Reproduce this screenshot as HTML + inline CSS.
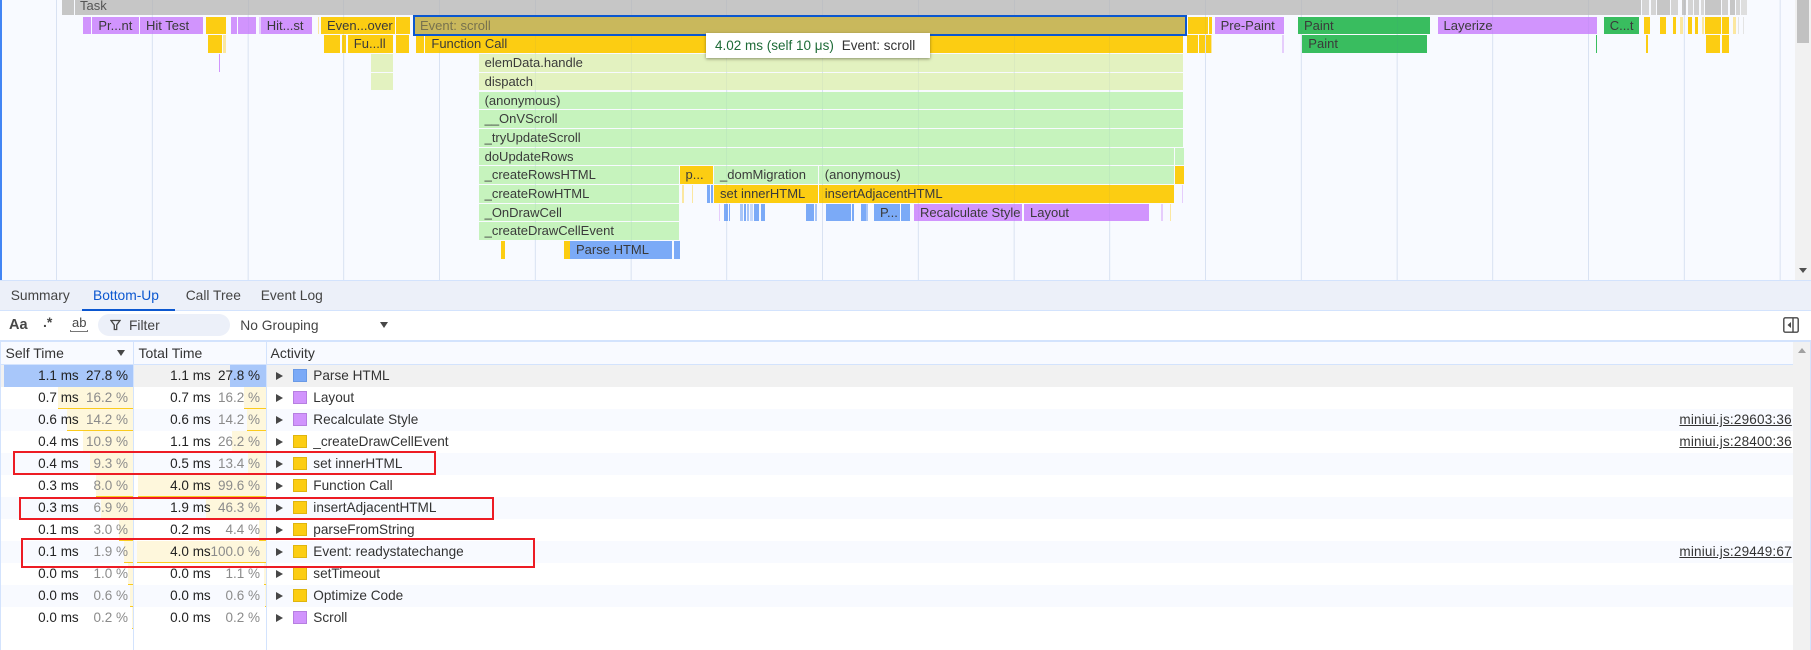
<!DOCTYPE html>
<html><head><meta charset="utf-8"><title>Bottom-Up</title>
<style>
html,body{margin:0;padding:0;width:1811px;height:650px;overflow:hidden;background:#fff;font-family:"Liberation Sans",sans-serif;font-size:13.6px;color:#333}
div,span,a{position:absolute;white-space:nowrap;box-sizing:border-box}
#fl{left:0;top:0;width:1811px;height:280px;background:linear-gradient(90deg,#e2e9f6 1.2px,transparent 1.2px) 56px 0/95.75px 100% repeat-x,#f8faff;overflow:hidden}
.g{top:0;width:1.2px;height:280px;background:rgba(60,90,170,.05);z-index:5}
.f{height:17.7px;line-height:17.7px;font-size:13px;color:#3a3a3a;padding-left:6px;overflow:hidden}
.f:empty{padding:0}
.r0{top:16.7px}.r1{top:35.3px}.r2{top:54px}.r3{top:72.7px}.r4{top:91.7px}.r5{top:110px}.r6{top:129px}.r7{top:147.7px}.r8{top:166.3px}.r9{top:185px}.r10{top:203.7px}.r11{top:222.3px}.r12{top:241px}
.p{background:#d194fd}.y{background:#fccd12}.gn{background:#39bd5f}.l{background:#e3f2c0}.m{background:#c6f3bd}.bl{background:#7baaf7}
.lp{background:#e6cdfc}.ly{background:#fbe7a0}.t{top:0;height:15.4px;background:#c6c6c6}
.tab{top:286px;line-height:20px;font-size:13.8px;color:#444}
.row{left:1px;width:1792px;height:22px}
.bar{height:22px;background:#fef7dc;border-bottom:1.3px solid #fbcb1e}
.n{height:22px;line-height:21px;text-align:right;color:#222;font-size:13.5px}
.pc{color:#8b8b8b}
.tri{left:275.5px;width:0;height:0;border-left:7px solid #474747;border-top:4px solid transparent;border-bottom:4px solid transparent}
.ic{left:293.3px;width:13.4px;height:13.4px;border:1px solid #dfb50f;background:#fccd12}
.ic.pu{background:#d194fd;border-color:#b67fe0}.ic.bu{background:#7baaf7;border-color:#6a9ae6}
.nm{left:313.3px;height:22px;line-height:21px;color:#333}
.lk{left:1669.5px;width:122.3px;height:22px;line-height:21px;text-decoration:underline;color:#333;letter-spacing:.2px;text-align:right;font-size:13.5px}
.red{border:2px solid #ed1c24;background:transparent;z-index:9}
.sep{top:341px;width:1.2px;height:309px;background:#d3e3fd;z-index:3}
</style></head><body>
<div id="fl">
<div style="left:0;top:0;width:2px;height:280px;background:#4285f4"></div>
<!-- task -->
<div class="t" style="left:61.6px;width:12.4px"></div>
<div class="t f" style="left:75px;width:1565.8px;height:15.4px;line-height:12px;padding-left:5px;top:0;color:#555">Task</div>
<div class="t" style="left:1641.6px;width:7.2px;background:#d4d4d4"></div><div class="t" style="left:1651px;width:5.2px;background:#d4d4d4"></div><div class="t" style="left:1657.3px;width:12.9px"></div><div class="t" style="left:1671px;width:7.2px;background:#d4d4d4"></div><div class="t" style="left:1681.8px;width:4.5px"></div><div class="t" style="left:1688px;width:5.2px;background:#d4d4d4"></div><div class="t" style="left:1694px;width:5.2px;background:#d0d0d0"></div><div class="t" style="left:1701px;width:3.2px;background:#d8d8d8"></div><div class="t" style="left:1705px;width:16.1px"></div><div class="t" style="left:1722px;width:6px;background:#d0d0d0"></div><div class="t" style="left:1729.6px;width:5.6px"></div><div class="t" style="left:1736px;width:4px;background:#d4d4d4"></div><div class="t" style="left:1741.4px;width:5.2px;background:#dedede"></div>
<!-- r0 -->
<div class="f r0 p" style="left:83px;width:8px"></div><div class="f r0 p" style="left:92.4px;width:46.4px">Pr...nt</div><div class="f r0 p" style="left:140px;width:63px">Hit Test</div><div class="f r0 y" style="left:205.8px;width:20.2px"></div><div class="f r0 p" style="left:230.8px;width:6.2px"></div><div class="f r0 p" style="left:238px;width:17.8px"></div><div class="f r0 lp" style="left:259.4px;width:1.3px"></div><div class="f r0 p" style="left:260.7px;width:51.3px">Hit...st</div><div class="f r0 ly" style="left:318px;width:1.4px"></div><div class="f r0 y" style="left:321px;width:73.6px">Even...over</div><div class="f r0 y" style="left:396px;width:14px"></div>
<div class="f r0" style="left:413px;top:15px;width:773.5px;height:21px;line-height:17.7px;background:#c9b85c;border:2px solid #0b57d0;padding-left:5px;color:#77724e;z-index:6">Event: scroll</div>
<div class="f r0 y" style="left:1187.7px;width:20px"></div><div class="f r0 y" style="left:1209px;width:3.4px"></div><div class="f r0 p" style="left:1214.6px;width:69.4px">Pre-Paint</div><div class="f r0 gn" style="left:1298px;width:131.5px">Paint</div><div class="f r0 p" style="left:1437.5px;width:159.5px">Layerize</div><div class="f r0 gn" style="left:1603.7px;width:35.8px">C...t</div><div class="f r0 y" style="left:1643.6px;width:6px"></div><div class="f r0 y" style="left:1660px;width:5.7px"></div><div class="f r0 y" style="left:1673px;width:2.8px"></div><div class="f r0 ly" style="left:1680px;width:3px"></div><div class="f r0 y" style="left:1688px;width:4px"></div><div class="f r0 y" style="left:1695px;width:3px"></div><div class="f r0 ly" style="left:1701.6px;width:2.4px"></div><div class="f r0 y" style="left:1705px;width:16px"></div><div class="f r0 y" style="left:1721.6px;width:7.4px"></div><div class="f r0 ly" style="left:1733px;width:3px"></div><div class="f r0" style="left:1737.7px;width:1.6px;background:#e4e4e4"></div><div class="f r0" style="left:1743.3px;width:1px;background:#e4e4e4"></div>
<!-- r1 -->
<div class="f r1 y" style="left:208px;width:14px"></div><div class="f r1 ly" style="left:223px;width:3px"></div><div class="f r1 y" style="left:323.7px;width:16.3px"></div><div class="f r1 y" style="left:341.5px;width:4.9px"></div><div class="f r1 y" style="left:347.8px;width:45.5px">Fu...ll</div><div class="f r1 y" style="left:396.4px;width:12.6px"></div><div class="f r1 y" style="left:415.6px;width:8.4px"></div><div class="f r1 y" style="left:425.4px;width:758.1px">Function Call</div>
<div class="f r1 y" style="left:1187px;width:11.4px"></div><div class="f r1 y" style="left:1199.4px;width:5.6px"></div><div class="f r1 y" style="left:1206px;width:4.6px"></div><div class="f r1 ly" style="left:1211px;width:1px"></div><div class="f r1 lp" style="left:1282px;width:1.5px"></div><div class="f r1 gn" style="left:1302.3px;width:125.2px">Paint</div><div class="f r1 gn" style="left:1596px;width:.9px"></div><div class="f r1 y" style="left:1645.6px;width:2.8px"></div><div class="f r1 y" style="left:1706px;width:14px"></div><div class="f r1 y" style="left:1722.4px;width:6.6px"></div>
<!-- r2..r7 -->
<div class="f r2 p" style="left:219.2px;width:1.3px"></div>
<div class="f r2 l" style="left:371px;width:22.3px"></div><div class="f r3 l" style="left:371px;width:22.3px"></div>
<div class="f r2 l" style="left:478.6px;width:704.9px">elemData.handle</div>
<div class="f r3 l" style="left:478.6px;width:704.9px">dispatch</div>
<div class="f r4 m" style="left:478.6px;width:704.9px">(anonymous)</div>
<div class="f r5 m" style="left:478.6px;width:704.9px">__OnVScroll</div>
<div class="f r6 m" style="left:478.6px;width:704.9px">_tryUpdateScroll</div>
<div class="f r7 m" style="left:478.6px;width:695.4px">doUpdateRows</div><div class="f r7 m" style="left:1175px;width:8.5px"></div>
<!-- r8 -->
<div class="f r8 m" style="left:478.6px;width:200.9px">_createRowsHTML</div><div class="f r8 y" style="left:679.5px;width:33.5px">p...</div><div class="f r8 m" style="left:714px;width:103.6px">_domMigration</div><div class="f r8 m" style="left:818.8px;width:355.5px">(anonymous)</div><div class="f r8 y" style="left:1175px;width:8.5px"></div>
<!-- r9 -->
<div class="f r9 m" style="left:478.6px;width:200.9px">_createRowHTML</div><div class="f r9 ly" style="left:681.5px;width:2.2px"></div><div class="f r9 ly" style="left:692px;width:1px"></div><div class="f r9 bl" style="left:707.4px;width:2.4px"></div><div class="f r9 bl" style="left:710.6px;width:2.2px"></div><div class="f r9 y" style="left:714px;width:103.6px">set innerHTML</div><div class="f r9 y" style="left:818.8px;width:355.5px">insertAdjacentHTML</div><div class="f r9 lp" style="left:1182px;width:1.2px"></div>
<!-- r10 -->
<div class="f r10 m" style="left:478.6px;width:200.9px">_OnDrawCell</div><div class="f r10 lp" style="left:718.8px;width:1px"></div><div class="f r10 bl" style="left:723.5px;width:4.5px"></div><div class="f r10 bl" style="left:728.5px;width:1.2px"></div><div class="f r10 bl" style="left:740.3px;width:3px;background:#a9c6f8"></div><div class="f r10 bl" style="left:744.3px;width:2px"></div><div class="f r10 bl" style="left:747.2px;width:2px;background:#a9c6f8"></div><div class="f r10 bl" style="left:750px;width:3px;background:#c5d8fb"></div><div class="f r10 bl" style="left:754px;width:4.6px"></div><div class="f r10 bl" style="left:761px;width:4px"></div><div class="f r10 bl" style="left:806px;width:8px"></div><div class="f r10 bl" style="left:815px;width:2.2px;background:#a9c6f8"></div><div class="f r10 bl" style="left:826px;width:25px"></div><div class="f r10 bl" style="left:852px;width:2px"></div><div class="f r10 bl" style="left:861px;width:4.5px"></div><div class="f r10 bl" style="left:866.2px;width:1.8px;background:#a9c6f8"></div><div class="f r10 bl" style="left:874px;width:26px">P...</div><div class="f r10 bl" style="left:901px;width:8.5px"></div><div class="f r10 p" style="left:914px;width:108.4px">Recalculate Style</div><div class="f r10 p" style="left:1024px;width:125px">Layout</div><div class="f r10 lp" style="left:1161px;width:2px"></div><div class="f r10 ly" style="left:1170.2px;width:1px"></div>
<!-- r11, r12 -->
<div class="f r11 m" style="left:478.6px;width:200.9px">_createDrawCellEvent</div>
<div class="f r12 y" style="left:501.3px;width:4.1px"></div><div class="f r12 y" style="left:564.3px;width:5.3px"></div><div class="f r12 bl" style="left:570px;width:102px">Parse HTML</div><div class="f r12 bl" style="left:674px;width:5.5px"></div>
<!-- grid -->
<div class="g" style="left:56px"></div><div class="g" style="left:151.75px"></div><div class="g" style="left:247.5px"></div><div class="g" style="left:343.25px"></div><div class="g" style="left:439px"></div><div class="g" style="left:534.75px"></div><div class="g" style="left:630.5px"></div><div class="g" style="left:726.25px"></div><div class="g" style="left:822px"></div><div class="g" style="left:917.75px"></div><div class="g" style="left:1013.5px"></div><div class="g" style="left:1109.25px"></div><div class="g" style="left:1205px"></div><div class="g" style="left:1300.75px"></div><div class="g" style="left:1396.5px"></div><div class="g" style="left:1492.25px"></div><div class="g" style="left:1588px"></div><div class="g" style="left:1683.75px"></div><div class="g" style="left:1779.5px"></div>
<!-- scrollbar -->
<div style="left:1794.5px;top:0;width:16.5px;height:280px;background:#f1f1f1;z-index:6"></div>
<div style="left:1796.5px;top:0;width:12.5px;height:43px;background:#c1c1c1;z-index:7"></div>
<div style="left:1799px;top:268px;width:0;height:0;border-top:5px solid #505050;border-left:4px solid transparent;border-right:4px solid transparent;z-index:7"></div>
<!-- tooltip -->
<div style="left:706px;top:33px;width:224px;height:25px;background:#fff;box-shadow:0 1px 3px rgba(60,60,30,.55);z-index:8"></div>
<span style="left:715px;top:37px;line-height:17px;font-size:13.5px;color:#1d6b37;z-index:9">4.02 ms (self 10 μs)</span>
<span style="left:841.7px;top:37px;line-height:17px;font-size:13.5px;color:#333;z-index:9">Event: scroll</span>
</div>
<!-- tabs -->
<div style="left:0;top:280px;width:1811px;height:31px;background:#ecf0f9;border-top:1.5px solid #d3e3fd;border-bottom:1px solid #d3e3fd"></div>
<span class="tab" style="left:10.7px">Summary</span>
<span class="tab" style="left:93px;color:#0b57d0">Bottom-Up</span>
<div style="left:82.3px;top:308.5px;width:92.4px;height:2px;background:#0b57d0"></div>
<span class="tab" style="left:185.7px">Call Tree</span>
<span class="tab" style="left:260.7px">Event Log</span>
<!-- toolbar -->
<span style="left:9px;top:316px;font-weight:bold;font-size:14.5px;line-height:18px;color:#474747">Aa</span>
<span style="left:43px;top:313px;font-size:14px;line-height:18px;font-weight:bold;color:#474747">.*</span>
<span style="left:72px;top:315px;font-size:13px;line-height:15px;color:#474747">ab</span>
<div style="left:70px;top:329.5px;width:18px;height:2px;border:1px solid #777;border-top:0;"></div>
<div style="left:98px;top:314px;width:132px;height:22px;background:#ecf0f9;border-radius:11px"></div>
<svg style="position:absolute;left:110px;top:319px" width="11" height="12" viewBox="0 0 11 12"><path d="M1 1.5h9L6.7 6v4.5H4.3V6z" fill="none" stroke="#474747" stroke-width="1.3"/></svg>
<span style="left:129px;top:317px;line-height:17px;color:#444;font-size:13.8px">Filter</span>
<span style="left:240.3px;top:317px;line-height:17px;color:#444;font-size:13.8px">No Grouping</span>
<div style="left:380px;top:322px;width:0;height:0;border-top:6px solid #474747;border-left:4px solid transparent;border-right:4px solid transparent"></div>
<svg style="position:absolute;left:1783px;top:317px" width="16" height="16" viewBox="0 0 16 16"><rect x=".8" y=".8" width="14.4" height="14.4" rx="1.5" fill="none" stroke="#474747" stroke-width="1.4"/><path d="M10 1v14" stroke="#474747" stroke-width="1.4"/><path d="M8 5v6L4.5 8z" fill="#474747"/></svg>
<div style="left:0;top:340px;width:1811px;height:2px;background:#d3e3fd"></div>
<!-- table header -->
<div style="left:1px;top:342px;width:1792px;height:23px;background:#f8faff;border-bottom:1px solid #d3e3fd"></div>
<span style="left:5.5px;top:344px;line-height:18px;font-size:14px">Self Time</span>
<div style="left:117px;top:350px;width:0;height:0;border-top:6px solid #474747;border-left:4.5px solid transparent;border-right:4.5px solid transparent"></div>
<span style="left:138.5px;top:344px;line-height:18px;font-size:14px">Total Time</span>
<span style="left:270.5px;top:344px;line-height:18px;font-size:14px">Activity</span>
<!-- rows bg -->
<div class="row" style="top:365px;background:#f1f1f1"></div>
<div class="row" style="top:409px;background:#f8faff"></div><div class="row" style="top:453px;background:#f8faff"></div><div class="row" style="top:497px;background:#f8faff"></div><div class="row" style="top:541px;background:#f8faff"></div><div class="row" style="top:585px;background:#f8faff"></div>
<!-- self bars -->
<div class="bar" style="left:4px;top:365px;width:129px;background:#a8c7fa;border:0"></div>
<div class="bar" style="left:58px;top:387px;width:75px"></div>
<div class="bar" style="left:67px;top:409px;width:66px"></div>
<div class="bar" style="left:83px;top:431px;width:50px"></div>
<div class="bar" style="left:90px;top:453px;width:43px"></div>
<div class="bar" style="left:95.7px;top:475px;width:37.3px"></div>
<div class="bar" style="left:101px;top:497px;width:32px"></div>
<div class="bar" style="left:119px;top:519px;width:14px"></div>
<div class="bar" style="left:124px;top:541px;width:9px"></div>
<div class="bar" style="left:128px;top:563px;width:5px"></div>
<div class="bar" style="left:130px;top:585px;width:3px"></div>
<div class="bar" style="left:132px;top:607px;width:1px"></div>
<!-- total bars -->
<div class="bar" style="left:230px;top:365px;width:35.6px;background:#a8c7fa;border:0"></div>
<div class="bar" style="left:244px;top:387px;width:21.6px"></div>
<div class="bar" style="left:247px;top:409px;width:18.6px"></div>
<div class="bar" style="left:232px;top:431px;width:33.6px"></div>
<div class="bar" style="left:248px;top:453px;width:17.6px"></div>
<div class="bar" style="left:137.8px;top:475px;width:127.8px"></div>
<div class="bar" style="left:206px;top:497px;width:59.6px"></div>
<div class="bar" style="left:259px;top:519px;width:6.6px"></div>
<div class="bar" style="left:137px;top:541px;width:128.6px"></div>
<div class="bar" style="left:264px;top:563px;width:1.6px"></div>
<div class="bar" style="left:264.6px;top:585px;width:1px"></div>
<!-- separators -->
<div class="sep" style="left:133px"></div><div class="sep" style="left:265.6px"></div>
<div style="left:0;top:342px;width:1px;height:308px;background:#d3e3fd"></div>
<!-- rows text -->
<div class="n" style="left:30px;width:48.7px;top:365px">1.1 ms</div><div class="n" style="left:70px;width:58px;top:365px">27.8 %</div><div class="n" style="left:160px;width:50.7px;top:365px">1.1 ms</div><div class="n" style="left:200px;width:60px;top:365px">27.8 %</div><div class="tri" style="top:372px"></div><div class="ic bu" style="top:369px"></div><span class="nm" style="top:365px">Parse HTML</span>
<div class="n" style="left:30px;width:48.7px;top:387px">0.7 ms</div><div class="n pc" style="left:70px;width:58px;top:387px">16.2 %</div><div class="n" style="left:160px;width:50.7px;top:387px">0.7 ms</div><div class="n pc" style="left:200px;width:60px;top:387px">16.2 %</div><div class="tri" style="top:394px"></div><div class="ic pu" style="top:391px"></div><span class="nm" style="top:387px">Layout</span>
<div class="n" style="left:30px;width:48.7px;top:409px">0.6 ms</div><div class="n pc" style="left:70px;width:58px;top:409px">14.2 %</div><div class="n" style="left:160px;width:50.7px;top:409px">0.6 ms</div><div class="n pc" style="left:200px;width:60px;top:409px">14.2 %</div><div class="tri" style="top:416px"></div><div class="ic pu" style="top:413px"></div><span class="nm" style="top:409px">Recalculate Style</span><a class="lk" style="top:409px">miniui.js:29603:36</a>
<div class="n" style="left:30px;width:48.7px;top:431px">0.4 ms</div><div class="n pc" style="left:70px;width:58px;top:431px">10.9 %</div><div class="n" style="left:160px;width:50.7px;top:431px">1.1 ms</div><div class="n pc" style="left:200px;width:60px;top:431px">26.2 %</div><div class="tri" style="top:438px"></div><div class="ic" style="top:435px"></div><span class="nm" style="top:431px">_createDrawCellEvent</span><a class="lk" style="top:431px">miniui.js:28400:36</a>
<div class="n" style="left:30px;width:48.7px;top:453px">0.4 ms</div><div class="n pc" style="left:70px;width:58px;top:453px">9.3 %</div><div class="n" style="left:160px;width:50.7px;top:453px">0.5 ms</div><div class="n pc" style="left:200px;width:60px;top:453px">13.4 %</div><div class="tri" style="top:460px"></div><div class="ic" style="top:457px"></div><span class="nm" style="top:453px">set innerHTML</span>
<div class="n" style="left:30px;width:48.7px;top:475px">0.3 ms</div><div class="n pc" style="left:70px;width:58px;top:475px">8.0 %</div><div class="n" style="left:160px;width:50.7px;top:475px">4.0 ms</div><div class="n pc" style="left:200px;width:60px;top:475px">99.6 %</div><div class="tri" style="top:482px"></div><div class="ic" style="top:479px"></div><span class="nm" style="top:475px">Function Call</span>
<div class="n" style="left:30px;width:48.7px;top:497px">0.3 ms</div><div class="n pc" style="left:70px;width:58px;top:497px">6.9 %</div><div class="n" style="left:160px;width:50.7px;top:497px">1.9 ms</div><div class="n pc" style="left:200px;width:60px;top:497px">46.3 %</div><div class="tri" style="top:504px"></div><div class="ic" style="top:501px"></div><span class="nm" style="top:497px">insertAdjacentHTML</span>
<div class="n" style="left:30px;width:48.7px;top:519px">0.1 ms</div><div class="n pc" style="left:70px;width:58px;top:519px">3.0 %</div><div class="n" style="left:160px;width:50.7px;top:519px">0.2 ms</div><div class="n pc" style="left:200px;width:60px;top:519px">4.4 %</div><div class="tri" style="top:526px"></div><div class="ic" style="top:523px"></div><span class="nm" style="top:519px">parseFromString</span>
<div class="n" style="left:30px;width:48.7px;top:541px">0.1 ms</div><div class="n pc" style="left:70px;width:58px;top:541px">1.9 %</div><div class="n" style="left:160px;width:50.7px;top:541px">4.0 ms</div><div class="n pc" style="left:200px;width:60px;top:541px">100.0 %</div><div class="tri" style="top:548px"></div><div class="ic" style="top:545px"></div><span class="nm" style="top:541px">Event: readystatechange</span><a class="lk" style="top:541px">miniui.js:29449:67</a>
<div class="n" style="left:30px;width:48.7px;top:563px">0.0 ms</div><div class="n pc" style="left:70px;width:58px;top:563px">1.0 %</div><div class="n" style="left:160px;width:50.7px;top:563px">0.0 ms</div><div class="n pc" style="left:200px;width:60px;top:563px">1.1 %</div><div class="tri" style="top:570px"></div><div class="ic" style="top:567px"></div><span class="nm" style="top:563px">setTimeout</span>
<div class="n" style="left:30px;width:48.7px;top:585px">0.0 ms</div><div class="n pc" style="left:70px;width:58px;top:585px">0.6 %</div><div class="n" style="left:160px;width:50.7px;top:585px">0.0 ms</div><div class="n pc" style="left:200px;width:60px;top:585px">0.6 %</div><div class="tri" style="top:592px"></div><div class="ic" style="top:589px"></div><span class="nm" style="top:585px">Optimize Code</span>
<div class="n" style="left:30px;width:48.7px;top:607px">0.0 ms</div><div class="n pc" style="left:70px;width:58px;top:607px">0.2 %</div><div class="n" style="left:160px;width:50.7px;top:607px">0.0 ms</div><div class="n pc" style="left:200px;width:60px;top:607px">0.2 %</div><div class="tri" style="top:614px"></div><div class="ic pu" style="top:611px"></div><span class="nm" style="top:607px">Scroll</span>
<!-- right scrollbar -->
<div style="left:1793.3px;top:342px;width:16.7px;height:308px;background:#f1f1f1"></div>
<div style="left:1810px;top:342px;width:1px;height:308px;background:#d3e3fd"></div>
<div style="left:1797.5px;top:348px;width:0;height:0;border-bottom:5px solid #a0a0a0;border-left:4px solid transparent;border-right:4px solid transparent"></div>
<!-- red rects -->
<div class="red" style="left:13.3px;top:451px;width:422.4px;height:24px"></div>
<div class="red" style="left:19px;top:496.7px;width:474.6px;height:23.6px"></div>
<div class="red" style="left:21.4px;top:537.7px;width:513.2px;height:30.3px"></div>
</body></html>
